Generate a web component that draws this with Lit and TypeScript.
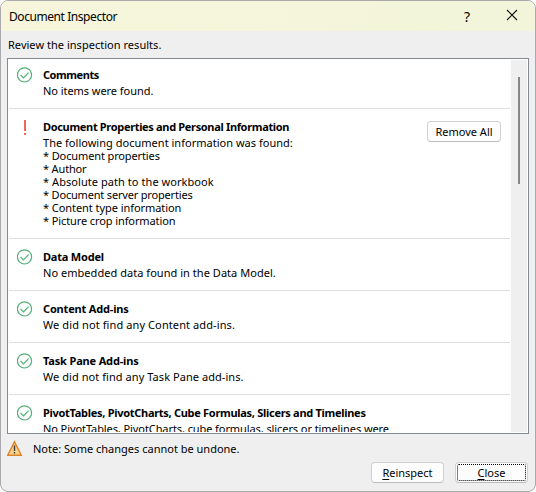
import { LitElement, html, css, nothing } from "lit";
import { customElement, property } from "lit/decorators.js";
import { styleMap } from "lit/directives/style-map.js";

/** A run of text with its own tracking, in pixels. */
interface Line {
  text: string;
  track: number;
}

interface Result {
  ok: boolean;
  title: Line;
  lines: Line[];
  action?: string;
}

const t = (text: string, track = 0): Line => ({ text, track });

const RESULTS: Result[] = [
  { ok: true, title: t("Comments", -0.45), lines: [t("No items were found.", -0.05)] },
  {
    ok: false,
    title: t("Document Properties and Personal Information", -0.33),
    lines: [
      t("The following document information was found:", 0.02),
      t("* Document properties", -0.12),
      t("* Author", -0.15),
      t("* Absolute path to the workbook", 0.06),
      t("* Document server properties", -0.18),
      t("* Content type information", -0.06),
      t("* Picture crop information", -0.1),
    ],
    action: "Remove All",
  },
  { ok: true, title: t("Data Model", -0.2), lines: [t("No embedded data found in the Data Model.", 0.04)] },
  { ok: true, title: t("Content Add-ins", -0.17), lines: [t("We did not find any Content add-ins.", 0.1)] },
  { ok: true, title: t("Task Pane Add-ins", -0.16), lines: [t("We did not find any Task Pane add-ins.", 0.06)] },
  {
    ok: true,
    title: t("PivotTables, PivotCharts, Cube Formulas, Slicers and Timelines", -0.29),
    lines: [t("No PivotTables, PivotCharts, cube formulas, slicers or timelines were", -0.085)],
  },
];

const tracking = (l: Line) => styleMap({ letterSpacing: `${l.track}px` });

const checkIcon = html`<svg width="16" height="16" viewBox="0 0 16 16" fill="none">
  <circle cx="7.5" cy="7.9" r="7.1" stroke="#52b078" stroke-width="1.2" />
  <path d="M3.6 8 6.4 10.8 11.6 5.6" stroke="#52b078" stroke-width="1.2" />
</svg>`;

const alertIcon = html`<svg width="16" height="17" viewBox="0 0 16 17">
  <path d="M7 1h2v11H7zM7 14h2v2H7z" fill="#ee6660" />
</svg>`;

@customElement("result-row")
export class ResultRow extends LitElement {
  @property({ attribute: false }) result!: Result;

  static styles = css`
    :host {
      display: flex;
      flex: none;
      box-sizing: border-box;
      padding: 10px 9px 11px 8px;
      border-bottom: 1px solid #dedede;
    }
    .icon { width: 16px; height: 16px; flex: none; margin-right: 10px; }
    .icon svg { display: block; }
    .text { flex: 1; white-space: nowrap; }
    .title { font-weight: 700; line-height: 16px; }
    .line { line-height: 13px; }
    .line:nth-child(2) { margin-top: 1px; }
    slot { display: block; }
  `;

  render() {
    const r = this.result;
    return html`
      <div class="icon">${r.ok ? checkIcon : alertIcon}</div>
      <div class="text">
        <div class="title" style=${tracking(r.title)}>${r.title.text}</div>
        ${r.lines.map((l) => html`<div class="line" style=${tracking(l)}>${l.text}</div>`)}
      </div>
      <slot></slot>
    `;
  }
}

@customElement("app-root")
export class AppRoot extends LitElement {
  static styles = css`
    :host {
      display: block;
      width: 536px;
      height: 492px;
      background: #fff;
      font: 11px/13px "Noto Sans", "Open Sans", sans-serif;
      color: #000;
    }
    .dialog {
      box-sizing: border-box;
      width: 536px;
      height: 492px;
      display: flex;
      flex-direction: column;
      border: 1px solid #aaa9ad;
      border-radius: 8px;
      background: #efefef;
      overflow: hidden;
    }
    .titlebar {
      height: 30px;
      flex: none;
      display: flex;
      align-items: center;
      padding: 0 17px 0 8px;
      background: linear-gradient(90deg, #f7f6dc, #f2f5d9);
      font-size: 12px;
    }
    .caption { flex: 1; letter-spacing: -0.43px; }
    .help { font-size: 14px; margin-right: 36px; }
    .titlebar svg { display: block; margin-top: -2px; }
    .intro { flex: none; height: 27px; line-height: 27px; padding-left: 7px; letter-spacing: 0.03px; }
    .list {
      box-sizing: border-box;
      flex: none;
      margin: 0 6px;
      height: 376px;
      border: 1px solid #858990;
      background: #fff;
      padding: 1px;
      display: flex;
      justify-content: space-between;
      overflow: hidden;
    }
    .rows {
      width: 501px;
      display: flex;
      flex-direction: column;
      overflow: hidden;
    }
    .rows result-row:first-child { padding-top: 7px; }
    .scrollbar { flex: none; width: 16px; background: #efefef; padding: 17px 0 0 7px; box-sizing: border-box; }
    .thumb { width: 2px; height: 107px; background: #868686; }
    .button {
      box-sizing: border-box;
      height: 21px;
      display: flex;
      align-items: center;
      justify-content: center;
      font: inherit;
      color: #000;
      padding: 0;
      border: 1px solid #d0d0d0;
      border-bottom-color: #bcbcbc;
      border-radius: 4px;
      background: #fdfdfd;
      white-space: nowrap;
    }
    .remove { width: 74px; margin-top: 2px; }
    .footer-button { width: 73px; }
    .focused { outline: 1px dotted #000; outline-offset: -3px; }
    .key { text-decoration: underline; text-underline-offset: 2px; }
    .note { flex: none; display: flex; align-items: center; height: 28px; padding-left: 6px; gap: 10px; }
    .actions { display: flex; justify-content: flex-end; gap: 11px; padding-right: 7px; }
  `;

  render() {
    return html`
      <div class="dialog">
        <div class="titlebar">
          <div class="caption">Document Inspector</div>
          <div class="help">?</div>
          <svg width="12" height="12" viewBox="0 0 12 12">
            <path d="M1 1 11 11M11 1 1 11" stroke="#111" stroke-width="1.1" />
          </svg>
        </div>
        <div class="intro">Review the inspection results.</div>
        <div class="list">
          <div class="rows">
            ${RESULTS.map(
              (r) => html`<result-row .result=${r}
                >${r.action ? html`<button class="button remove">${r.action}</button>` : nothing}</result-row
              >`
            )}
          </div>
          <div class="scrollbar"><div class="thumb"></div></div>
        </div>
        <div class="note">
          <svg width="16" height="16" viewBox="0 0 16 16">
            <path d="M7.5 1.9 14.3 15.2H.7Z" fill="#fbd38a" stroke="#e08227" stroke-width="1.4" />
            <path d="M6.8 5.5h1.4v5.5H6.8zM6.8 12h1.4v1.4H6.8z" fill="#3b3b3b" />
          </svg>
          <span>Note: Some changes cannot be undone.</span>
        </div>
        <div class="actions">
          <button class="button footer-button"><span><span class="key">R</span>einspect</span></button>
          <button class="button footer-button focused"><span><span class="key">C</span>lose</span></button>
        </div>
      </div>
    `;
  }
}
